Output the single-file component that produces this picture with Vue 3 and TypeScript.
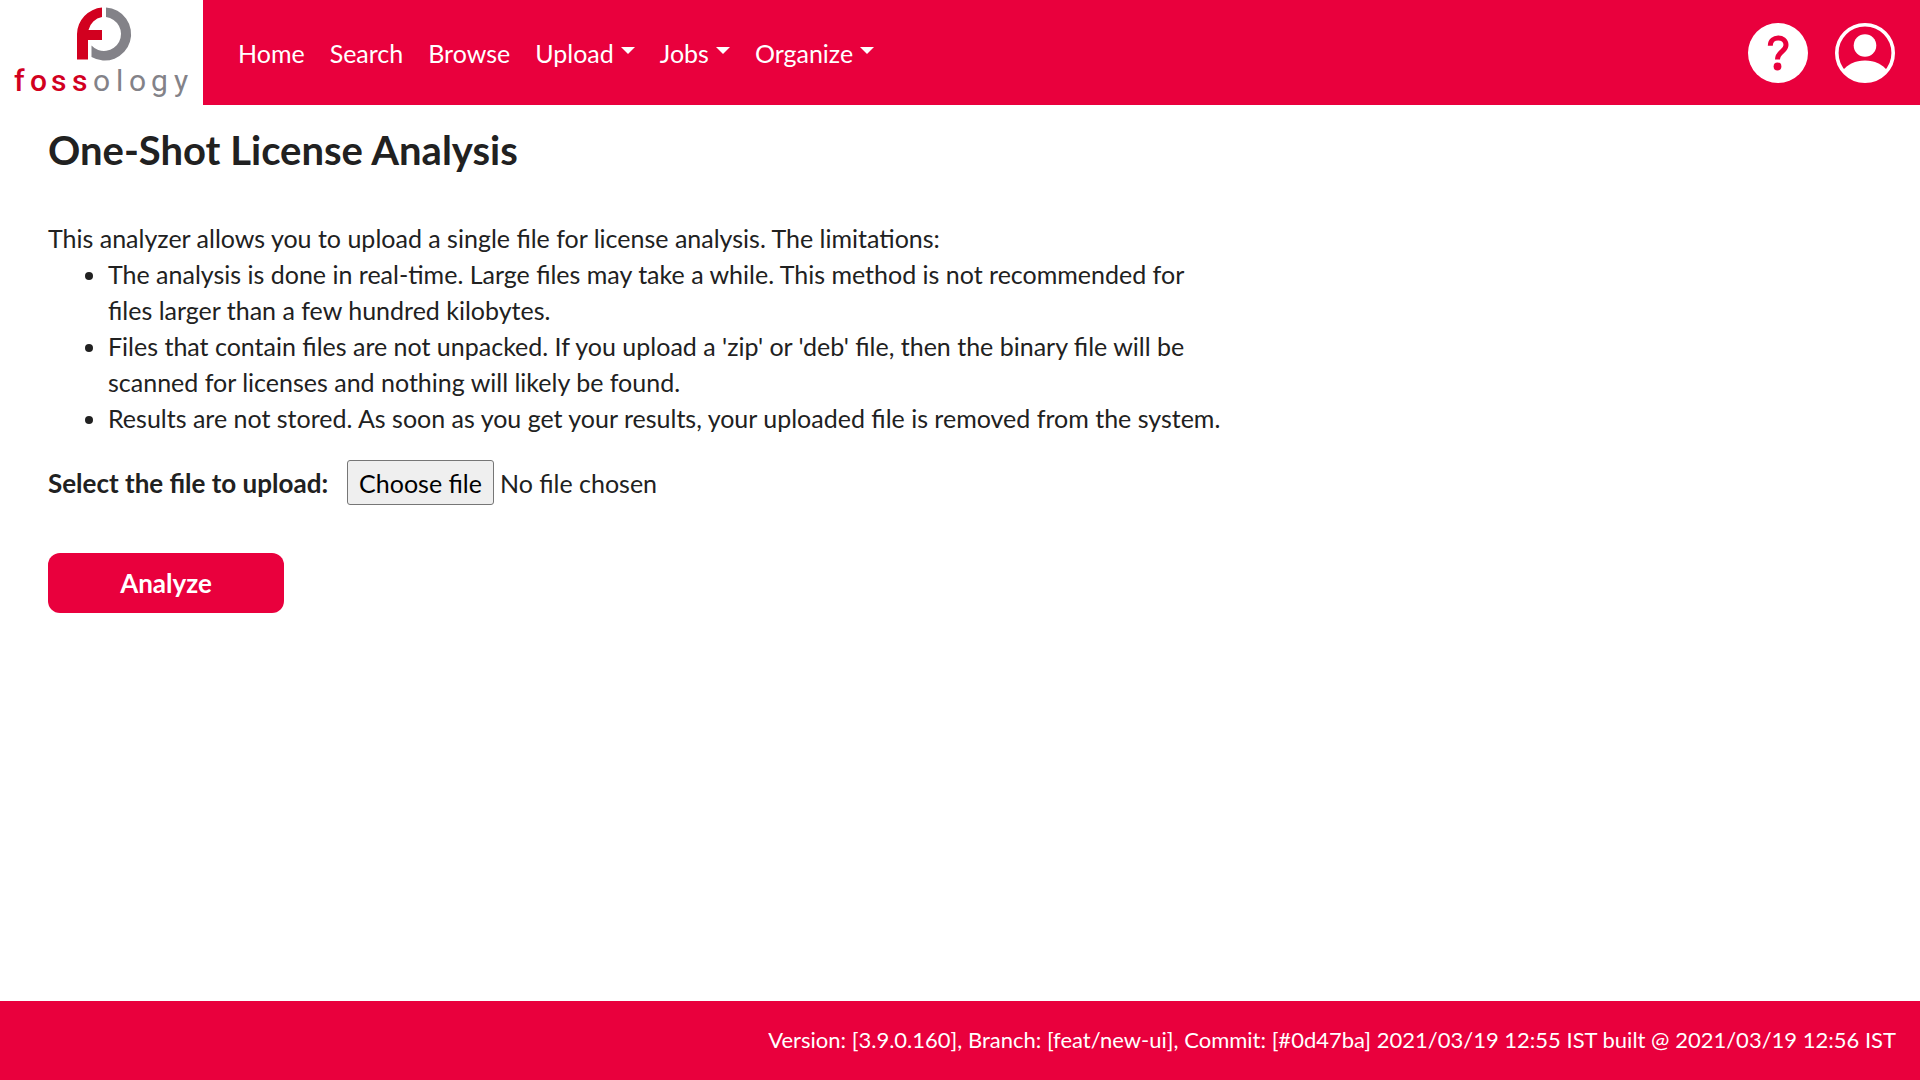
<script setup lang="ts">
import { ref } from 'vue'

interface NavItem {
  label: string
  menu: boolean
}

const navItems: NavItem[] = [
  { label: 'Home', menu: false },
  { label: 'Search', menu: false },
  { label: 'Browse', menu: false },
  { label: 'Upload', menu: true },
  { label: 'Jobs', menu: true },
  { label: 'Organize', menu: true },
]

const limitations: string[] = [
  'The analysis is done in real-time. Large files may take a while. This method is not recommended for files larger than a few hundred kilobytes.',
  "Files that contain files are not unpacked. If you upload a 'zip' or 'deb' file, then the binary file will be scanned for licenses and nothing will likely be found.",
  'Results are not stored. As soon as you get your results, your uploaded file is removed from the system.',
]

const fileInput = ref<HTMLInputElement | null>(null)
const fileName = ref('No file chosen')

function pickFile(): void {
  fileInput.value?.click()
}

function onFileChange(event: Event): void {
  const files = (event.target as HTMLInputElement).files
  fileName.value = files && files.length > 0 ? files[0].name : 'No file chosen'
}
</script>

<template>
  <div class="page">
    <header class="topbar">
      <a class="logo" href="#" aria-label="fossology">
        <svg width="203" height="105" viewBox="0 0 203 105">
          <path d="M102 7.600A27 27 0 0 0 77 34V59.500H88V40H102V30H88.500A17 17 0 0 1 102 17Z" fill="#d2001f" />
          <path d="M106 7.600A26.500 26.500 0 1 1 91.500 57.100V45.500A17 17 0 1 0 106 17.100Z" fill="#838288" />
          <text class="wordmark" y="91">
            <tspan class="word-red" x="14 30 51 72">foss</tspan><tspan class="word-grey" x="93 116 129 151 174">ology</tspan>
          </text>
        </svg>
      </a>
      <nav class="nav">
        <a v-for="item in navItems" :key="item.label" class="nav-link" href="#">
          {{ item.label }}<span v-if="item.menu" class="caret"></span>
        </a>
      </nav>
      <div class="actions">
        <button class="icon-button" type="button" aria-label="Help">
          <svg width="60" height="60" viewBox="0 0 60 60">
            <circle cx="30" cy="30" r="30" fill="#fff" />
            <path d="M22.300 22.700C22.300 12.500 38 12.500 38 22C38 29 29.500 28 29.500 36.500" fill="none" stroke="#e9003d" stroke-width="5" />
            <circle cx="29.500" cy="43.500" r="3.900" fill="#e9003d" />
          </svg>
        </button>
        <button class="icon-button" type="button" aria-label="Account">
          <svg width="60" height="60" viewBox="0 0 60 60">
            <clipPath id="avatar-disc"><circle cx="30" cy="30" r="29" /></clipPath>
            <circle cx="30" cy="30" r="28.200" fill="none" stroke="#fff" stroke-width="3.600" />
            <circle cx="30" cy="22.500" r="11.300" fill="#fff" />
            <path d="M7 48.500C13 41 20 37.500 30 37.500S47 41 53 48.500V60H7Z" fill="#fff" clip-path="url(#avatar-disc)" />
          </svg>
        </button>
      </div>
    </header>

    <main class="content">
      <h1 class="title">One-Shot License Analysis</h1>
      <p class="intro">This analyzer allows you to upload a single file for license analysis. The limitations:</p>
      <ul class="limits">
        <li v-for="text in limitations" :key="text">{{ text }}</li>
      </ul>
      <form @submit.prevent>
        <div class="file-row">
          <label class="file-label" for="upload-file">Select the file to upload:</label>
          <button class="file-button" type="button" @click="pickFile">Choose file</button>
          <span class="file-name">{{ fileName }}</span>
          <input id="upload-file" ref="fileInput" type="file" hidden @change="onFileChange" />
        </div>
        <button class="submit" type="submit">Analyze</button>
      </form>
    </main>

    <footer class="footer">
      Version: [3.9.0.160], Branch: [feat/new-ui], Commit: [#0d47ba] 2021/03/19 12:55 IST built @ 2021/03/19 12:56 IST
    </footer>
  </div>
</template>

<style>
body {
  margin: 0;
}
</style>

<style scoped>
.page {
  display: flex;
  flex-direction: column;
  min-height: 100vh;
  background: #fff;
  color: #212121;
  font-family: Lato, "Liberation Sans", sans-serif;
  font-size: 25px;
  line-height: 36px;
}

.topbar {
  display: flex;
  align-items: center;
  background: #e9003d;
}

.logo {
  display: block;
  background: #fff;
}

.logo svg,
.icon-button svg {
  display: block;
}

.wordmark {
  font-family: Roboto, sans-serif;
  font-size: 30px;
}

.word-red {
  fill: #d2001f;
  font-weight: 500;
}

.word-grey {
  fill: #838288;
}

.nav {
  display: flex;
  gap: 25px;
  padding-left: 35px;
}

.nav-link {
  display: flex;
  align-items: center;
  color: #fff;
  text-decoration: none;
}

.caret {
  margin-left: 7px;
  margin-bottom: 4px;
  border-top: 7px solid #fff;
  border-left: 7px solid transparent;
  border-right: 7px solid transparent;
}

.actions {
  display: flex;
  gap: 27px;
  margin-left: auto;
  padding-right: 25px;
}

.icon-button {
  padding: 0;
  border: 0;
  background: none;
  cursor: pointer;
}

.content {
  flex: 1;
  padding: 23px 48px;
}

.title {
  margin: 0 0 48px;
  font-size: 40px;
  line-height: 44px;
  font-weight: 700;
}

.intro {
  margin: 0;
}

.limits {
  max-width: 1180px;
  box-sizing: border-box;
  margin: 0 0 24px;
  padding-left: 60px;
}

.file-row {
  display: flex;
  align-items: center;
  margin-bottom: 48px;
}

.file-label {
  margin-right: 24px;
  font-weight: 700;
}

.file-label,
.submit {
  font-size: 26px;
}

.file-label {
  margin-right: 19px;
}

.file-button {
  height: 45px;
  margin-right: 6px;
  padding: 0 11px;
  border: 1px solid #767676;
  border-radius: 3px;
  background: #efefef;
  color: #000;
  font: inherit;
}

.submit {
  width: 236px;
  height: 60px;
  border: 0;
  border-radius: 12px;
  background: #e9003d;
  color: #fff;
  font-family: inherit;
  font-weight: 700;
}

.footer {
  padding: 21px 24px 22px;
  background: #e9003d;
  color: #fff;
  font-size: 22px;
  text-align: right;
}
</style>
